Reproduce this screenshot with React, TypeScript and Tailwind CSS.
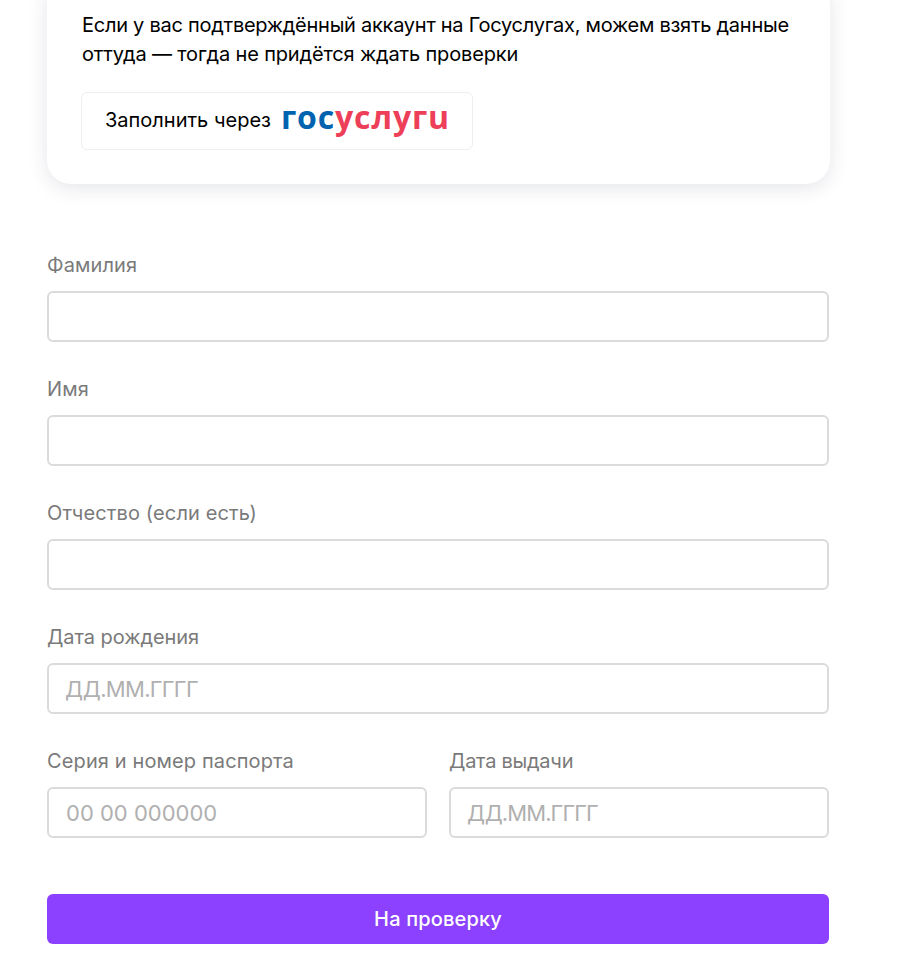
const fontStack = "font-['Inter','Noto_Sans',sans-serif]";

type FieldProps = {
  label: string;
  placeholder?: string;
  className?: string;
  labelClassName?: string;
  inputClassName?: string;
};

const Field = ({ label, placeholder, className, labelClassName, inputClassName }: FieldProps) => {
  return (
    <label className={`flex flex-col ${className ?? ""}`}>
      <span className={`h-[29px] text-[20px] leading-[29px] tracking-[0.12px] text-[#7a7a7a] ${labelClassName ?? ""}`}>{label}</span>
      <input
        readOnly
        placeholder={placeholder}
        className={`mt-[11px] h-[51px] w-full rounded-[6px] border-2 border-[#dbdbdb] bg-white px-[17px] text-[22px] outline-none placeholder:text-[#b0b0b0] ${inputClassName ?? ""}`}
      />
    </label>
  );
};

export default function App() {
  return (
    <div className={`h-[975px] w-[898px] overflow-hidden bg-white ${fontStack}`}>
      <div className="ml-[47px] w-[783px]">
        {/* Gosuslugi card, cut off by the scroll position */}
        <div className="-mt-[10px] rounded-b-[24px] bg-white px-[34px] pb-[34px] pt-[21px] shadow-[0_4px_20px_rgba(30,40,70,0.12)]">
          <p className="whitespace-nowrap pl-px text-[20px] leading-[29px] text-black">
            <span className="tracking-[-0.26px]">Если у вас подтверждённый аккаунт на Госуслугах, можем взять данные</span>
            <br />
            <span className="tracking-[-0.15px]">оттуда — тогда не придётся ждать проверки</span>
          </p>
          <button className="mt-[23px] flex h-[58px] w-[392px] items-center rounded-[6px] border border-[#eeeeee] bg-white pl-[23px]">
            <span className="mb-[2px] text-[20px] text-black">Заполнить через</span>
            <span className="mb-[8px] ml-[10px] text-[32px] font-bold leading-none tracking-[0.85px] font-['Open_Sans',sans-serif]">
              <span className="text-[#0063b0]">гос</span>
              <span className="text-[#ee3f58]">услугu</span>
            </span>
          </button>
        </div>

        {/* Form */}
        <div className="mt-[67px] flex w-[782px] flex-col gap-[33px]">
          <Field label="Фамилия" />
          <Field label="Имя" />
          <Field label="Отчество (если есть)" />
          <Field label="Дата рождения" placeholder="ДД.ММ.ГГГГ" labelClassName="!tracking-[-0.05px]" inputClassName="tracking-[-0.7px] !px-[16px]" />
          <div className="flex gap-[22px]">
            <Field label="Серия и номер паспорта" placeholder="00 00 000000" className="flex-1" />
            <Field label="Дата выдачи" placeholder="ДД.ММ.ГГГГ" className="flex-1" labelClassName="!tracking-[-0.25px]" inputClassName="tracking-[-0.9px] !px-[16px]" />
          </div>
        </div>
        <button className="mt-[56px] h-[50px] w-[782px] rounded-[6px] bg-[#8b41ff] text-[20px] font-medium tracking-[0.15px] text-white">
          На проверку
        </button>
      </div>
    </div>
  );
}
